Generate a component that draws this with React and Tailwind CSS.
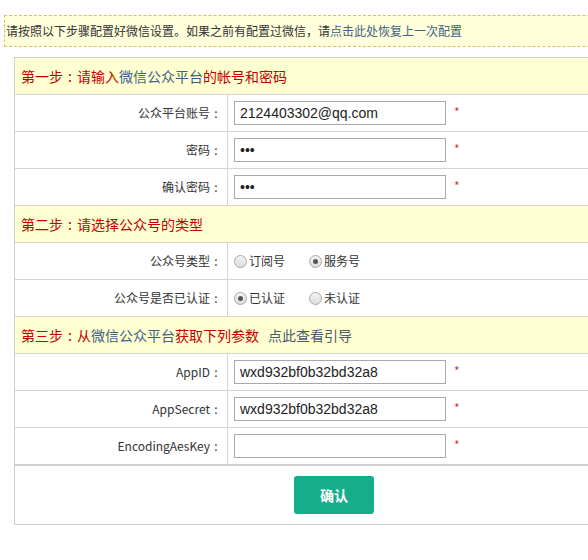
const font = { fontFamily: '"Noto Sans CJK SC", "Liberation Sans", sans-serif' };

const blue = 'text-[#3e6185]';

// full-width colon drawn centred in its box, as the original font does
const Colon = ({ size = 12 }) => (
  <span className={`inline-block text-center ${size === 14 ? 'w-[14px]' : 'w-[12px]'}`}>:</span>
);

const StepHeader = ({ step, children }) => (
  <div className="flex h-[37px] items-center border-b border-[#d4d4d4] bg-[#ffffd2] pl-[6px] text-[14px] text-[#c40000]">
    {step}
    <Colon size={14} />
    {children}
  </div>
);

const Radio = ({ checked, label }) => (
  <label className="flex items-center text-[12px] text-[#333]">
    <span className="mr-[2px] flex h-[13px] w-[13px] items-center justify-center rounded-full border border-[#a8a8a8] bg-gradient-to-b from-[#f4f4f4] to-[#dcdcdc]">
      {checked && <span className="h-[5px] w-[5px] rounded-full bg-[#555]" />}
    </span>
    {label}
  </label>
);

const Row = ({ label, children, last }) => (
  <div className={`flex h-[37px] border-b border-[#d4d4d4] ${last ? 'h-[38px] border-b-2 border-b-[#cfcfcf]' : ''}`}>
    <div className="flex w-[213px] items-center justify-end border-r border-[#d4d4d4] pr-[5px] text-[12px] text-[#333]">
      {label}
      <Colon />
    </div>
    <div className="flex flex-1 items-center pl-[6px]">{children}</div>
  </div>
);

const Field = ({ value, type = 'text' }) => (
  <>
    <input
      type={type}
      defaultValue={value}
      className="h-[24px] w-[212px] border border-[#a9a9a9] bg-white px-[5px] text-[14px] text-[#222] outline-none"
      style={{ fontFamily: '"Liberation Sans", Arial, sans-serif' }}
    />
    <span className="ml-[8px] -mt-[2px] text-[12px] text-[#cc3b3b]">*</span>
  </>
);

export default function App() {
  return (
    <div className="h-[560px] w-[588px] overflow-hidden bg-white" style={font}>
      <div className="w-[700px] pl-[4px] pt-[15px]">
        <div className="flex h-[32px] items-center border border-dashed border-[#d9bf6a] bg-[#ffffdc] pl-px text-[12px] text-[#333]">
          请按照以下步骤配置好微信设置。如果之前有配置过微信，请<span className={blue}>点击此处恢复上一次配置</span>
        </div>

        <div className="ml-[10px] mt-[10px] w-[640px] border border-[#cfcfcf]">
          <StepHeader step="第一步">
            请输入<span className={blue}>微信公众平台</span>的帐号和密码
          </StepHeader>
          <Row label="公众平台账号">
            <Field value="2124403302@qq.com" />
          </Row>
          <Row label="密码">
            <Field value="abc" type="password" />
          </Row>
          <Row label="确认密码">
            <Field value="abc" type="password" />
          </Row>

          <StepHeader step="第二步">请选择公众号的类型</StepHeader>
          <Row label="公众号类型">
            <div className="flex gap-[24px]">
              <Radio label="订阅号" />
              <Radio checked label="服务号" />
            </div>
          </Row>
          <Row label="公众号是否已认证">
            <div className="flex gap-[24px]">
              <Radio checked label="已认证" />
              <Radio label="未认证" />
            </div>
          </Row>

          <StepHeader step="第三步">
            从<span className={blue}>微信公众平台</span>获取下列参数
            <span className="ml-[9px] text-[#4a5a6c]">点此查看引导</span>
          </StepHeader>
          <Row label="AppID">
            <Field value="wxd932bf0b32bd32a8" />
          </Row>
          <Row label="AppSecret">
            <Field value="wxd932bf0b32bd32a8" />
          </Row>
          <Row label="EncodingAesKey" last>
            <Field value="" />
          </Row>

          <div className="flex h-[58px] items-center justify-center">
            <button className="h-[38px] w-[80px] rounded-[3px] bg-[#15ae8a] text-[14px] font-bold text-white">
              确认
            </button>
          </div>
        </div>
      </div>
    </div>
  );
}
